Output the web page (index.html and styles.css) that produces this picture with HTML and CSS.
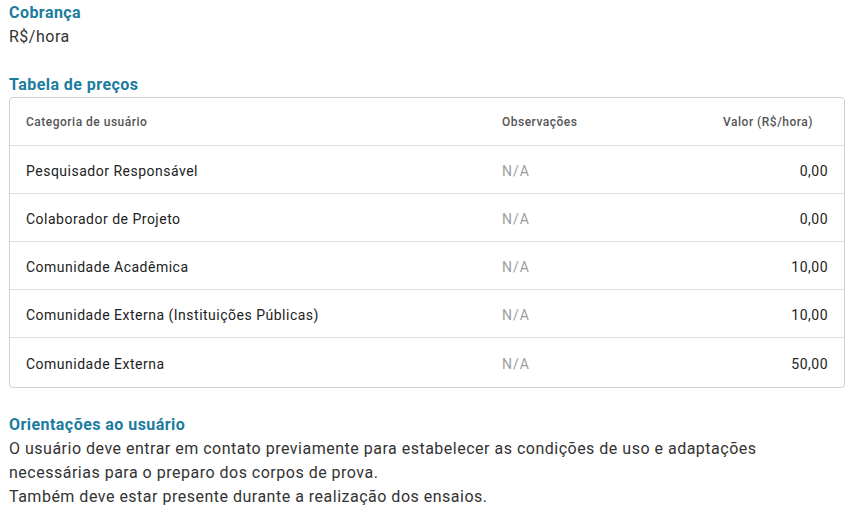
FILE: index.html
```html
<!DOCTYPE html>
<html lang="pt-BR">
<head>
<meta charset="utf-8">
<link rel="stylesheet" href="styles.css">
</head>
<body>
<div class="page">
  <section class="block">
    <h3 class="title">Cobrança</h3>
    <p class="text">R$/hora</p>
  </section>
  <section class="block gap">
    <h3 class="title">Tabela de preços</h3>
    <div class="table-wrap">
      <table class="prices">
        <thead>
          <tr>
            <th class="c1">Categoria de usuário</th>
            <th class="c2">Observações</th>
            <th class="c3">Valor (R$/hora)</th>
          </tr>
        </thead>
        <tbody>
          <tr><td>Pesquisador Responsável</td><td class="na">N/A</td><td class="num">0,00</td></tr>
          <tr><td>Colaborador de Projeto</td><td class="na">N/A</td><td class="num">0,00</td></tr>
          <tr><td>Comunidade Acadêmica</td><td class="na">N/A</td><td class="num">10,00</td></tr>
          <tr><td>Comunidade Externa (Instituições Públicas)</td><td class="na">N/A</td><td class="num">10,00</td></tr>
          <tr><td>Comunidade Externa</td><td class="na">N/A</td><td class="num">50,00</td></tr>
        </tbody>
      </table>
    </div>
  </section>
  <section class="block gap2">
    <h3 class="title">Orientações ao usuário</h3>
    <p class="text">O usuário deve entrar em contato previamente para estabelecer as condições de uso e adaptações necessárias para o preparo dos corpos de prova.<br>Também deve estar presente durante a realização dos ensaios.</p>
  </section>
</div>
</body>
</html>
```
FILE: styles.css
```css
* { box-sizing: border-box; }
html, body { margin: 0; padding: 0; background: #fff; }
body {
  font-family: Roboto, "Noto Sans", Arial, sans-serif;
  color: rgba(0,0,0,0.87);
}
.page {
  width: 845px;
  padding: 1px 0 0 9px;
}
.block { margin: 0; }
.gap { margin-top: 24px; }
.gap2 { margin-top: 25px; }
.title {
  margin: 0;
  font-size: 16px;
  line-height: 24px;
  font-weight: 700;
  color: #1a7c9e;
  letter-spacing: 0.45px;
}
.text {
  margin: 0;
  font-size: 16px;
  line-height: 24px;
  letter-spacing: 0.5px;
  color: #333;
}
.table-wrap {
  border: 1px solid #d0d0d0;
  border-radius: 4px;
  overflow: hidden;
}
.prices {
  width: 100%;
  border-collapse: collapse;
}
.prices th, .prices td {
  height: 48px;
  padding: 4px 16px 0;
  text-align: left;
  vertical-align: middle;
}
.prices th {
  height: 47px;
  padding-top: 2px;
  font-size: 12px;
  font-weight: 500;
  color: #555;
  letter-spacing: 0.5px;
  border-bottom: 1px solid #e0e0e0;
}
.prices td {
  font-size: 14px;
  letter-spacing: 0.5px;
  color: #222;
  border-bottom: 1px solid #e0e0e0;
}
.prices tbody tr:last-child td { border-bottom: none; height: 50px; }
.prices .c1 { width: 476px; }
.prices .c3 { text-align: right; padding-right: 31px; }
.prices .na { color: #9e9e9e; letter-spacing: 1px; }
.prices .num { text-align: right; }
```
